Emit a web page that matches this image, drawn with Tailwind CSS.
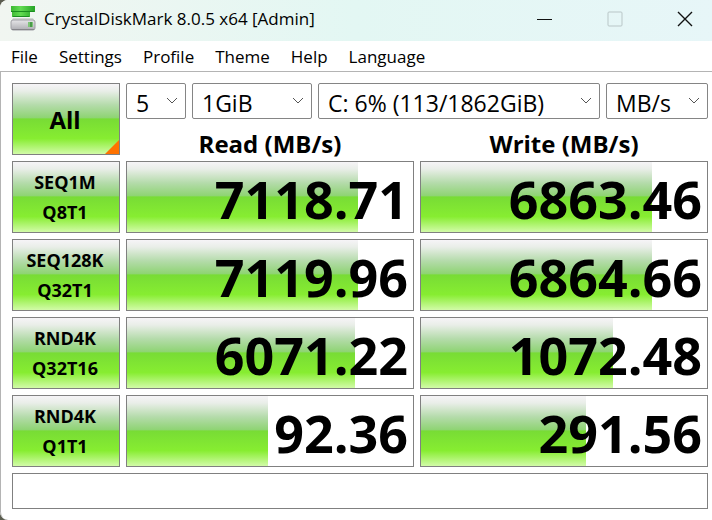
<!DOCTYPE html>
<html lang="en">
<head>
  <meta charset="UTF-8" />
  <meta name="viewport" content="width=device-width, initial-scale=1" />
  <title>CrystalDiskMark 8.0.5 x64 [Admin]</title>

  <script src="https://cdn.jsdelivr.net/npm/@tailwindcss/browser@4"></script>
</head>
<body class="bg-[#5b5d50] font-['Open_Sans',sans-serif] text-black">
  <div class="min-h-screen flex flex-col overflow-hidden rounded-l-lg bg-white">

    <!-- Title bar -->
    <header class="flex h-[41px] shrink-0 items-center bg-linear-to-r from-[#f1f6f1] via-[#e3f7f3] to-[#e7f6f8] pl-[10px] pb-[4px]">
      <svg class="h-[26px] w-[26px]" viewBox="0 0 26 26" aria-hidden="true">
        <defs>
          <linearGradient id="top" x1="0" x2="1"><stop offset="0" stop-color="#3cb832" /><stop offset=".4" stop-color="#62dc52" /><stop offset="1" stop-color="#25a326" /></linearGradient>
          <linearGradient id="drive" x1="0" x2="0" y1="0" y2="1"><stop offset="0" stop-color="#e6e6e8" /><stop offset="1" stop-color="#adadb2" /></linearGradient>
        </defs>
        <path d="M3 12h20l2 4H1z" fill="#d0d6d1" />
        <rect x="1" y="14" width="24" height="10" rx="2" fill="url(#drive)" stroke="#a0a0a5" />
        <path d="M2 23.500h22" stroke="#85858a" />
        <path d="M18 16h5v5h-5z" fill="#7cc476" />
        <path d="M20 16h2v5h-2z" fill="#4a9a49" />
        <path d="M1 0h24v6h-5v5H2V6H1z" fill="url(#top)" />
        <path d="M1 5.500h23M3 10.500h16" stroke="#1b8c20" />
      </svg>
      <h1 class="ml-2 flex-1 text-[17px] leading-5">CrystalDiskMark 8.0.5 x64 [Admin]</h1>
      <button type="button" aria-label="Minimize" class="flex h-full w-[70px] items-center justify-center">
        <svg class="h-4 w-4" viewBox="0 0 16 16"><path d="M0 8.500h15" stroke="#111" /></svg>
      </button>
      <button type="button" aria-label="Maximize" disabled class="flex h-full w-[70px] items-center justify-center">
        <svg class="h-4 w-4" viewBox="0 0 16 16"><rect x="1" y="1" width="14" height="14" rx="1" fill="none" stroke="#b9c6c7" /></svg>
      </button>
      <button type="button" aria-label="Close" class="flex h-full w-[62px] items-center justify-center pl-[8px]">
        <svg class="h-4 w-4" viewBox="0 0 16 16"><path d="M1 1l14 14M15 1L1 15" stroke="#111" stroke-width="1.400" /></svg>
      </button>
    </header>

    <!-- Menu -->
    <nav class="flex h-[31px] shrink-0 items-center gap-[21px] border-b border-[#b4b4b4] pl-[11px] pt-[2px] text-[17px]">
      <a href="#">File</a>
      <a href="#">Settings</a>
      <a href="#">Profile</a>
      <a href="#">Theme</a>
      <a href="#">Help</a>
      <a href="#">Language</a>
    </nav>

    <main class="flex-1 rounded-bl-lg border-l border-[#b4b4b4] pl-[5px] pt-[5px]">
      <div class="-mr-[2px]">
        <table class="w-full table-fixed border-separate border-spacing-[6px]">
          <colgroup>
            <col class="w-[108px]" />
            <col />
            <col />
          </colgroup>
          <thead>
            <tr>
              <td rowspan="2" class="p-0">
                <button type="button" class="relative block h-[72px] w-full border border-[#808080] bg-linear-[to_bottom,#f6f4f7_0%,#e9eee8_10%,#b4dbaa_30%,#8fd474_48%,#78dc35_50%,#87ed31_78%,#d2fba8_100%] pt-[2px] pr-[2px] text-[24px] font-bold">
                  All
                  <svg class="absolute right-0 bottom-0 h-[14px] w-[14px]" viewBox="0 0 14 14" aria-hidden="true"><path d="M14 0v14H0z" fill="#ff7200" /></svg>
                </button>
              </td>
              <td colspan="2" class="p-0">
                <div class="flex h-[36px] gap-[6px] text-[23px]">
                  <div class="relative w-[60px]">
                    <select aria-label="Test count" class="h-full w-full appearance-none rounded-[2px] border border-[#858585] bg-white pt-[2px] pl-[9px]"><option>5</option></select>
                    <svg class="pointer-events-none absolute top-[14px] right-[8px] h-2 w-3" viewBox="0 0 12 8" fill="none" stroke="#555"><path d="M1 1l5 5 5-5" /></svg>
                  </div>
                  <div class="relative w-[120px]">
                    <select aria-label="Test size" class="h-full w-full appearance-none rounded-[2px] border border-[#858585] bg-white pt-[2px] pl-[9px]"><option>1GiB</option></select>
                    <svg class="pointer-events-none absolute top-[14px] right-[8px] h-2 w-3" viewBox="0 0 12 8" fill="none" stroke="#555"><path d="M1 1l5 5 5-5" /></svg>
                  </div>
                  <div class="relative flex-1">
                    <select aria-label="Drive" class="h-full w-full appearance-none rounded-[2px] border border-[#858585] bg-white pt-[2px] pl-[9px]"><option>C: 6% (113/1862GiB)</option></select>
                    <svg class="pointer-events-none absolute top-[14px] right-[8px] h-2 w-3" viewBox="0 0 12 8" fill="none" stroke="#555"><path d="M1 1l5 5 5-5" /></svg>
                  </div>
                  <div class="relative w-[102px]">
                    <select aria-label="Unit" class="h-full w-full appearance-none rounded-[2px] border border-[#858585] bg-white pt-[2px] pl-[9px]"><option>MB/s</option></select>
                    <svg class="pointer-events-none absolute top-[14px] right-[8px] h-2 w-3" viewBox="0 0 12 8" fill="none" stroke="#555"><path d="M1 1l5 5 5-5" /></svg>
                  </div>
                </div>
              </td>
            </tr>
            <tr>
              <th scope="col" class="h-[30px] p-0 pt-[8px] text-[24px] leading-[22px] font-bold">Read (MB/s)</th>
              <th scope="col" class="h-[30px] p-0 pt-[8px] text-[24px] leading-[22px] font-bold">Write (MB/s)</th>
            </tr>
          </thead>
          <tbody id="results">
            <!-- Result rows injected here -->
          </tbody>
          <tfoot>
            <tr>
              <td colspan="3" class="p-0">
                <input type="text" aria-label="Comment" class="block h-[36px] w-full border border-[#808080] bg-white px-2 text-[17px]" />
              </td>
            </tr>
          </tfoot>
        </table>
      </div>
    </main>
  </div>

  <script>
    // bar = filled part of the cell, in percent
    const tests = [
      { name: 'SEQ1M', queue: 'Q8T1', read: '7118.71', readBar: 80.8, write: '6863.46', writeBar: 80.8 },
      { name: 'SEQ128K', queue: 'Q32T1', read: '7119.96', readBar: 80.8, write: '6864.66', writeBar: 80.8 },
      { name: 'RND4K', queue: 'Q32T16', read: '6071.22', readBar: 79.7, write: '1072.48', writeBar: 67.1 },
      { name: 'RND4K', queue: 'Q1T1', read: '92.36', readBar: 49.3, write: '291.56', writeBar: 57.7 },
    ];

    const cell = (value, bar) => `
      <td class="p-0">
        <div class="relative flex h-[72px] items-center justify-end overflow-hidden border border-[#808080] bg-white pr-[5px]">
          <div class="absolute inset-y-0 left-0 bg-linear-[to_bottom,#f6f4f7_0%,#e9eee8_10%,#b4dbaa_30%,#8fd474_48%,#78dc35_50%,#87ed31_78%,#d2fba8_100%]" style="width: ${bar}%"></div>
          <span class="relative pt-[4px] text-[52px] leading-[70px] font-bold">${value}</span>
        </div>
      </td>`;

    document.getElementById('results').innerHTML = tests.map(t => `
      <tr>
        <th scope="row" class="p-0">
          <button type="button" class="block h-[72px] w-full border border-[#808080] bg-linear-[to_bottom,#f6f4f7_0%,#e9eee8_10%,#b4dbaa_30%,#8fd474_48%,#78dc35_50%,#87ed31_78%,#d2fba8_100%] pr-[2px] text-[18px] leading-[30px] font-bold">
            ${t.name}<br />${t.queue}
          </button>
        </th>
        ${cell(t.read, t.readBar)}
        ${cell(t.write, t.writeBar)}
      </tr>`).join('');
  </script>
</body>
</html>
